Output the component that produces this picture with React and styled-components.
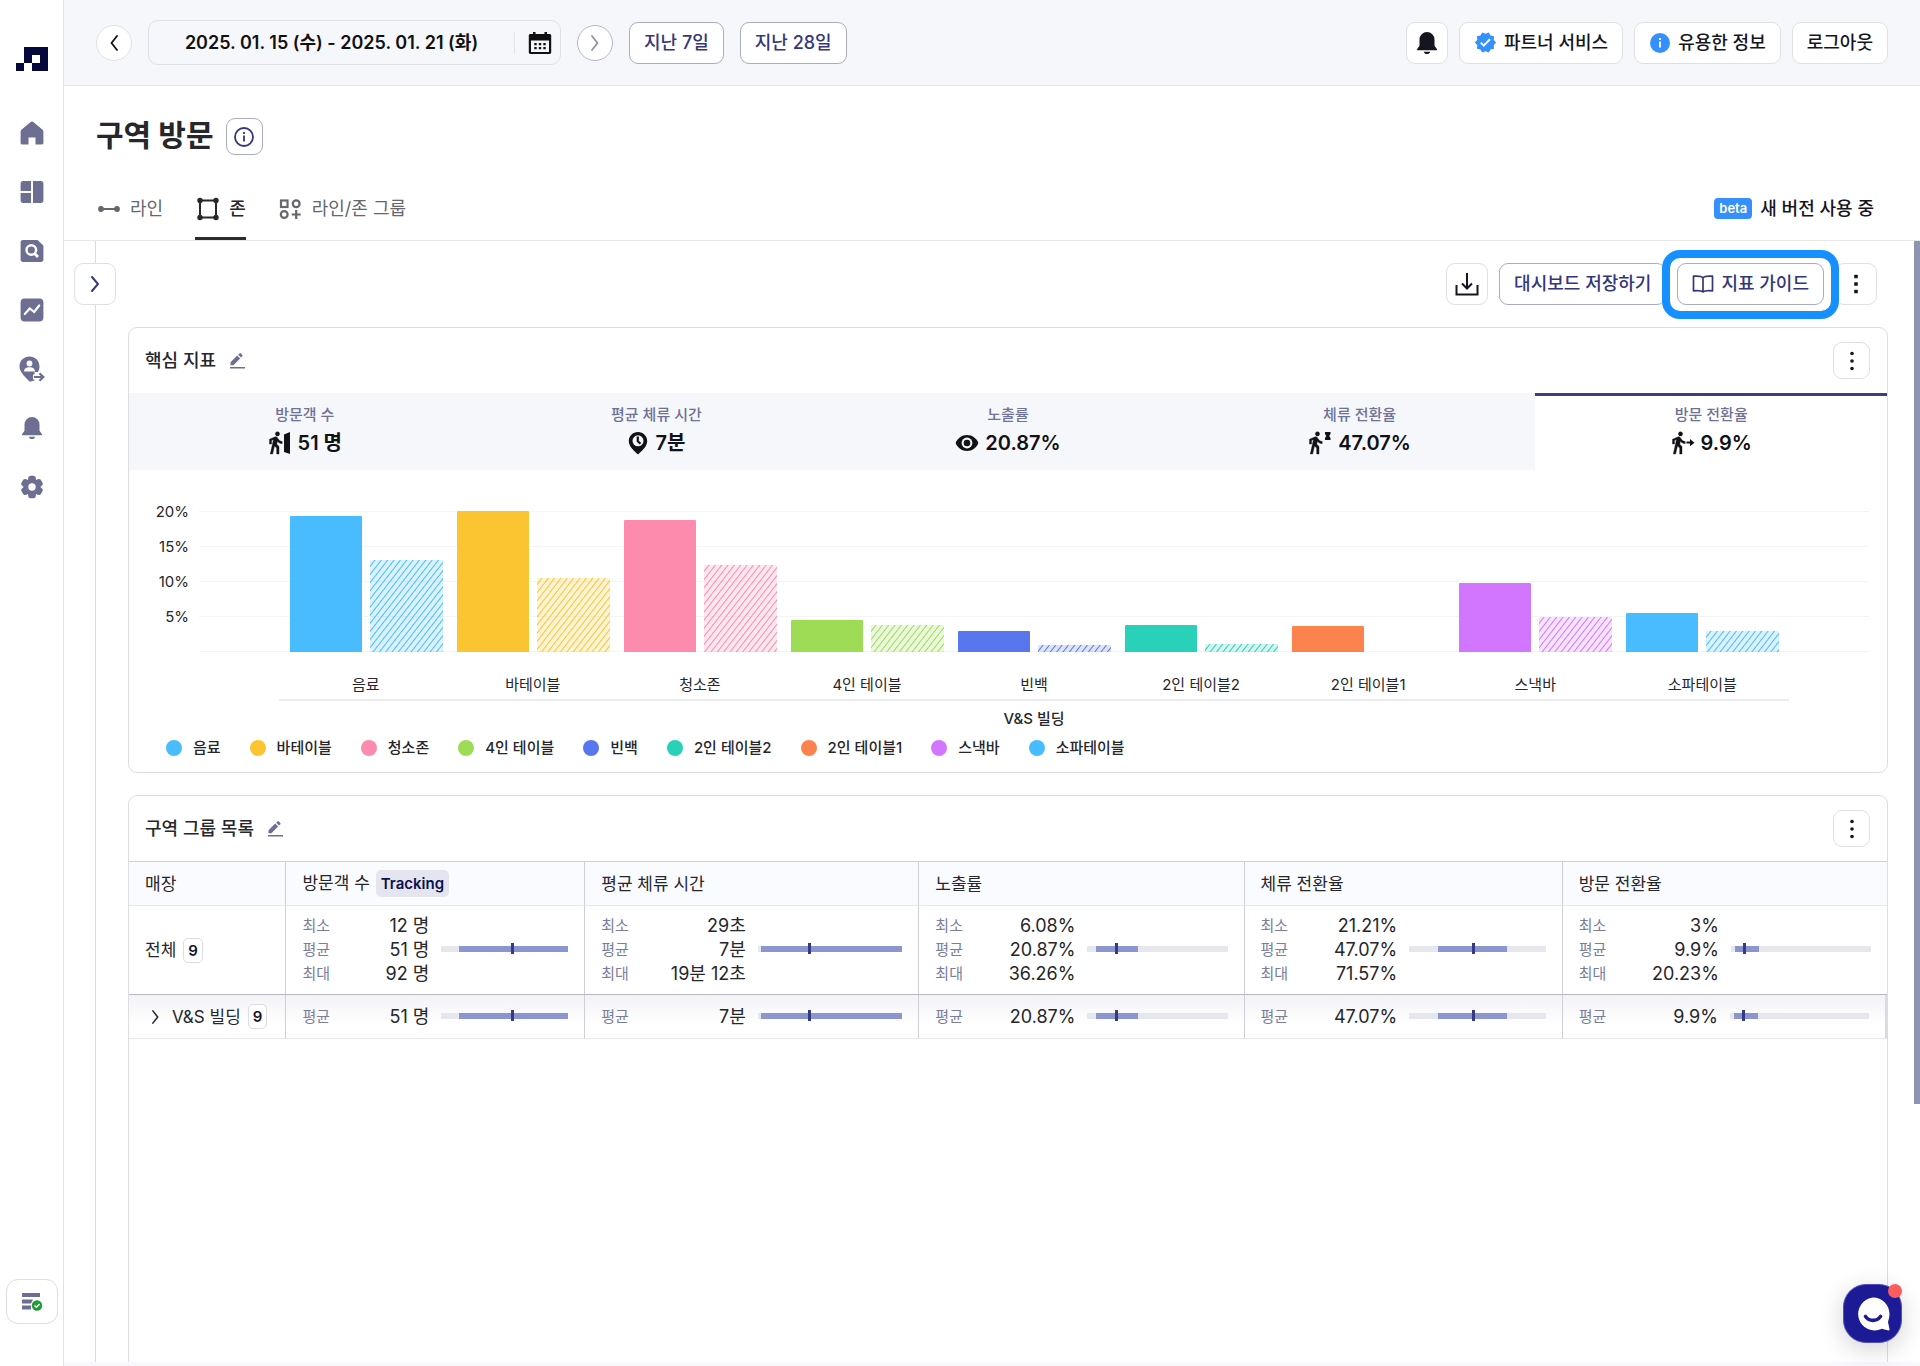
import React from "react";
import styled, { createGlobalStyle } from "styled-components";
import { MdVerified } from "react-icons/md";

const GlobalStyle = createGlobalStyle`
  *, *::before, *::after {
    box-sizing: border-box;
  }

  body {
    margin: 0;
    background: #fff;
    color: #26262b;
    font-family: Inter, "Noto Sans CJK KR", sans-serif;
    font-size: 17px;
    line-height: 24px;
  }

  button {
    font: inherit;
    color: inherit;
    cursor: pointer;
  }

  svg {
    display: block;
    flex: none;
  }
`;

const Layout = styled.div`
  display: grid;
  grid-template-columns: 64px minmax(0, 1fr);
  min-height: 100vh;
`;

const Sidebar = styled.aside`
  display: flex;
  flex-direction: column;
  align-items: center;
  padding: 47px 0 42px;
  border-right: 1px solid #e2e2e6;
`;

const SideNav = styled.nav`
  display: flex;
  flex-direction: column;
  gap: 31px;
  margin-top: 48px;
  color: #6c6f92;
`;

const SideLink = styled.a`
  display: flex;
  align-items: center;
  justify-content: center;
  width: 40px;
  height: 28px;
  color: inherit;
`;

const StatusButton = styled.button`
  display: flex;
  align-items: center;
  justify-content: center;
  width: 52px;
  height: 45px;
  margin-top: auto;
  padding: 0;
  border: 1px solid #dedee3;
  border-radius: 12px;
  background: #fff;
`;

const Main = styled.div`
  display: flex;
  flex-direction: column;
  border-bottom: 4px solid #f8f8fc;
`;

const TopBar = styled.header`
  display: flex;
  align-items: center;
  justify-content: space-between;
  height: 86px;
  padding: 0 32px;
  border-bottom: 1px solid #e4e5e9;
  background: #f6f7fa;
`;

const BarGroup = styled.div`
  display: flex;
  align-items: center;
  gap: ${(props) => props.$gap}px;
`;

const RoundButton = styled.button`
  display: flex;
  align-items: center;
  justify-content: center;
  width: 36px;
  height: 36px;
  padding: 0;
  border: 1px solid ${(props) => (props.$outlined ? "#b4b5cc" : "#e0e1e6")};
  border-radius: 50%;
  background: #fff;
  color: ${(props) => (props.$outlined ? "#8f90a8" : "#111")};
`;

const DateBox = styled.div`
  display: flex;
  align-items: center;
  width: 413px;
  height: 45px;
  border: 1px solid #e0e1e6;
  border-radius: 10px;
`;

const DateText = styled.span`
  flex: 1;
  text-align: center;
  font-size: 18px;
  font-weight: 600;
  color: #111;
`;

const CalendarButton = styled.button`
  display: flex;
  align-items: center;
  width: 46px;
  height: 22px;
  padding: 0 0 0 13px;
  border: 0;
  border-left: 1px solid #e6e6ea;
  background: none;
  color: #111;
`;

const Button = styled.button`
  display: flex;
  align-items: center;
  justify-content: center;
  gap: 7px;
  height: 42px;
  padding: 0 14px;
  border: 1px solid ${(props) => (props.$primary ? "#a9abc8" : "#dfe0e5")};
  border-radius: 9px;
  background: #fff;
  color: ${(props) => (props.$primary ? "#343779" : "#15151f")};
  font-size: 18px;
  font-weight: 500;
  white-space: nowrap;
`;

const IconButton = styled(Button)`
  width: ${(props) => props.$size}px;
  height: ${(props) => props.$size}px;
  padding: 0;
`;

const PageHead = styled.div`
  padding: 32px 46px 0 32px;
  border-bottom: 1px solid #e8e8ec;
`;

const TitleRow = styled.div`
  display: flex;
  align-items: center;
  gap: 12px;
`;

const Title = styled.h1`
  margin: 0;
  padding-bottom: 2px;
  font-size: 30px;
  line-height: 35px;
  font-weight: 700;
`;

const TabRow = styled.div`
  display: flex;
  align-items: center;
  justify-content: space-between;
  margin-top: 20px;
`;

const Tabs = styled.div`
  display: flex;
  gap: 32px;
`;

const Tab = styled.button`
  display: flex;
  align-items: center;
  gap: 10px;
  height: 65px;
  padding: 2px 0 0;
  border: 0;
  background: none;
  color: ${(props) => (props.$active ? "#26262b" : "#66666c")};
  font-size: 18px;
  font-weight: ${(props) => (props.$active ? 500 : 400)};
  box-shadow: inset 0 -3px ${(props) => (props.$active ? "#2c2c30" : "transparent")};
`;

const Version = styled.div`
  display: flex;
  align-items: center;
  gap: 8px;
  padding-top: 2px;
  color: #15151f;
  font-size: 18px;
  font-weight: 500;
`;

const Beta = styled.span`
  padding: 0 5px;
  border-radius: 4px;
  background: #3590fb;
  color: #fff;
  font-size: 13px;
  line-height: 21px;
  font-weight: 600;
`;

const Workspace = styled.div`
  position: relative;
  display: flex;
  flex: 1;
`;

const Rail = styled.div`
  width: 32px;
  border-right: 1px solid #d9d9e0;
`;

const RailToggle = styled(IconButton)`
  position: absolute;
  top: 22px;
  left: 10px;
`;

const ScrollThumb = styled.div`
  position: absolute;
  top: 0;
  right: 0;
  width: 6px;
  height: 77%;
  background: #8e92b3;
`;

const Content = styled.main`
  display: flex;
  flex: 1;
  flex-direction: column;
  gap: 22px;
  min-width: 0;
  padding: 22px 32px 0;
`;

const Toolbar = styled.div`
  display: flex;
  justify-content: flex-end;
  gap: 11px;
  padding-right: 11px;
`;

const Highlight = styled.div`
  position: relative;

  &::after {
    content: "";
    position: absolute;
    inset: -13px -15px -14px;
    border: 8px solid #1690ff;
    border-radius: 18px;
    pointer-events: none;
  }
`;

const Card = styled.section`
  border: 1px solid #dcdce2;
  border-radius: 9px;
`;

const FillCard = styled(Card)`
  flex: 1;
  border-bottom: 0;
  border-bottom-left-radius: 0;
  border-bottom-right-radius: 0;
`;

const CardHead = styled.div`
  display: flex;
  align-items: center;
  justify-content: space-between;
  height: 65px;
  padding: 0 17px 0 16px;
`;

const CardTitle = styled.h2`
  display: flex;
  align-items: center;
  gap: 12px;
  margin: 0;
  font-size: 18px;
  font-weight: 500;
`;

const PlainButton = styled.button`
  padding: 0;
  border: 0;
  background: none;
  color: #6c6f92;
`;

const MetricTabs = styled.div`
  display: grid;
  grid-template-columns: repeat(5, 1fr);
`;

const MetricTab = styled.button`
  display: flex;
  flex-direction: column;
  align-items: center;
  height: 77px;
  padding: 11px 0 0;
  border: 0;
  background: ${(props) => (props.$active ? "#fff" : "#f6f7fa")};
  box-shadow: inset 0 3px ${(props) => (props.$active ? "#3b3d7c" : "transparent")};
`;

const MetricLabel = styled.span`
  color: #6f7197;
  font-size: 15px;
  line-height: 22px;
  font-weight: 500;
`;

const MetricValue = styled.span`
  display: flex;
  align-items: center;
  gap: 6px;
  margin-top: 2px;
  color: #111118;
  font-size: 20px;
  line-height: 30px;
  font-weight: 600;
`;

const Chart = styled.div`
  display: grid;
  grid-template-columns: 70px 1fr;
  padding: 24px 18px 0 0;
  font-size: 15px;
  line-height: 20px;
`;

const YAxis = styled.div`
  padding-right: 10px;
  text-align: right;
  line-height: 35px;
`;

const Plot = styled.div`
  display: flex;
  height: 141px;
  margin-top: 17px;
  padding: 0 5%;
  background: repeating-linear-gradient(#f4f4f6 0 1px, transparent 1px 35px);
`;

const BarPair = styled.div`
  display: flex;
  flex: 1;
  align-items: flex-end;
  gap: 8px;
  padding: 0 7px;
`;

const Bar = styled.div`
  flex: 1;
  border-radius: 1px 1px 0 0;
  background: ${(props) =>
    props.$striped
      ? `repeating-linear-gradient(128deg, ${props.$color}33 0 3px, ${props.$color} 4px, ${props.$color}33 5px)`
      : props.$color};
`;

const XAxis = styled.div`
  grid-column: 2;
  margin: 0 4.8%;
`;

const XLabels = styled.div`
  display: flex;
  padding: 23px 3px 4px;
  border-bottom: 2px solid #ececf0;

  span {
    flex: 1;
    text-align: center;
  }
`;

const XGroup = styled.div`
  margin-top: 8px;
  text-align: center;
  font-weight: 500;
`;

const Legend = styled.ul`
  display: flex;
  flex-wrap: wrap;
  gap: 0 29px;
  margin: 0;
  padding: 9px 37px 14px;
  list-style: none;
  font-size: 15px;
  line-height: 20px;
  font-weight: 500;
`;

const LegendItem = styled.li`
  display: flex;
  align-items: center;
  gap: 11px;

  &::before {
    content: "";
    width: 16px;
    height: 16px;
    border-radius: 50%;
    background: ${(props) => props.$color};
  }
`;

const Table = styled.table`
  width: 100%;
  table-layout: fixed;
  border-collapse: separate;
  border-spacing: 0;
`;

const HeadCell = styled.th`
  height: 45px;
  padding: 0 16px;
  border-top: 1px solid #cfcfd8;
  border-bottom: 1px solid #e6e7ec;
  background: #fafbff;
  text-align: left;
  font-weight: 400;

  & + & {
    border-left: 1px solid #cfcfd8;
  }
`;

const Tracking = styled.span`
  display: inline-block;
  margin-left: 6px;
  padding: 0 5px;
  border-radius: 5px;
  background: #e4e5ee;
  color: #0d1050;
  font-size: 15px;
  line-height: 27px;
  font-weight: 600;
`;

const Cell = styled.td`
  padding: 8px 16px;
  border-bottom: 1px solid #b8b8c4;

  & + & {
    border-left: 1px solid #cfcfd8;
  }
`;

const GroupCell = styled(Cell)`
  padding: 9px 16px;
  border-bottom-color: #e8e8ec;
  background: linear-gradient(#f3f3f6, #fff 70%);

  &:last-child {
    border-right: 2px solid #dadae2;
  }
`;

const Store = styled.div`
  display: flex;
  align-items: center;
  gap: 7px;
  white-space: nowrap;
`;

const ExpandButton = styled.button`
  display: flex;
  width: 20px;
  padding: 0 0 0 7px;
  border: 0;
  background: none;
`;

const Count = styled.span`
  padding: 0 4px;
  border: 1px solid #dcdce2;
  border-radius: 5px;
  background: #fff;
  color: #15151f;
  font-size: 15px;
  line-height: 23px;
  font-weight: 600;
`;

const Metric = styled.div`
  display: grid;
  grid-template-columns: 1fr 1fr;
  align-items: center;
  gap: 12px;
`;

const StatLine = styled.div`
  display: flex;
  justify-content: space-between;
  white-space: nowrap;
`;

const StatLabel = styled.span`
  color: #7b7d9c;
  font-size: 15px;
`;

const StatValue = styled.span`
  font-size: 18px;
`;

const Track = styled.div`
  position: relative;
  height: 6px;
  margin-bottom: 2px;
  background: #e6e7ec;
`;

const Range = styled.div`
  position: absolute;
  top: 0;
  bottom: 0;
  background: #8b96d0;
`;

const Mark = styled.div`
  position: absolute;
  top: -3px;
  bottom: -2px;
  width: 3px;
  background: #343a85;
`;

const ChatButton = styled.button`
  position: fixed;
  right: 18px;
  bottom: 23px;
  display: flex;
  align-items: center;
  justify-content: center;
  width: 59px;
  height: 59px;
  padding: 0;
  border: 1px solid #5450bd;
  border-radius: 23px;
  background: #1c1a94;
  box-shadow: 0 6px 24px rgba(0, 0, 0, 0.18);

  &::after {
    content: "";
    position: absolute;
    top: -1px;
    right: -1px;
    width: 14px;
    height: 14px;
    border-radius: 50%;
    background: #fc5c5c;
  }
`;

const Logo = () => (
  <svg width="32" height="24" viewBox="0 0 32 24" fill="#06073c">
    <path fillRule="evenodd" d="M8 0h24v24H16v-8H8zM16 8v8h8V8z" />
    <path d="M0 16h8v8H0z" />
  </svg>
);

const HomeIcon = () => (
  <svg width="24" height="24" viewBox="0 0 24 24" fill="currentColor">
    <path d="M12 .5c.5 0 .9.2 1.3.5l9 7.4c.7.6 1.1 1.200 1.100 2.100V22c0 .8-.6 1.400-1.400 1.400h-6.500v-7h-7v7H2c-.8 0-1.400-.6-1.400-1.400V10.500c0-.9.4-1.500 1.100-2.100l9-7.400c.4-.3.8-.5 1.300-.5z" />
  </svg>
);

const DashboardIcon = () => (
  <svg width="24" height="24" viewBox="0 0 24 24" fill="currentColor">
    <path d="M3 1h8v10H.6V3.400C.6 2 1.600 1 3 1zM.6 13H11v10H3C1.600 23 .6 22 .6 20.600zM13 1h8c1.400 0 2.400 1 2.400 2.400v17.200c0 1.400-1 2.400-2.400 2.400h-8z" />
  </svg>
);

const SearchDocIcon = () => (
  <svg width="24" height="24" viewBox="0 0 24 24">
    <path fill="currentColor" d="M3 1h14.500L23.400 6.500V20.600c0 1.400-1 2.400-2.400 2.400H3C1.600 23 .6 22 .6 20.600V3.400C.6 2 1.600 1 3 1z" />
    <circle cx="11.300" cy="11" r="4.800" fill="none" stroke="#fff" strokeWidth="2.400" />
    <path d="M14.500 14.500l3.500 3.500" stroke="#fff" strokeWidth="2.800" />
  </svg>
);

const TrendIcon = () => (
  <svg width="24" height="24" viewBox="0 0 24 24">
    <rect x=".6" y=".6" width="22.800" height="22.800" rx="4" fill="currentColor" />
    <path d="M4.800 16l5-5.500 4.400 3.500 5-6.500" fill="none" stroke="#fff" strokeWidth="2.200" strokeLinecap="round" />
  </svg>
);

const VisitorIcon = () => (
  <svg width="26" height="26" viewBox="0 0 26 26">
    <path fill="currentColor" d="M10.500.5c5.600 0 10 4.300 10 10 0 1.800-.5 3.500-1.500 5.500h-3.500v8.500L12 25.500h-1.500C5 20 .5 15.500.5 10.500c0-5.700 4.400-10 10-10z" />
    <circle cx="10.500" cy="7.500" r="2.900" fill="#fff" />
    <path fill="#fff" d="M5 15.500c0-3 2.500-4.200 5.500-4.200s5.500 1.200 5.500 4.200z" />
    <path d="M14 21h9M20.500 16.500l4.500 4.500-4.500 4.500" fill="none" stroke="#fff" strokeWidth="5" />
    <path d="M15 21h8.500M20.500 17.200l3.800 3.800-3.800 3.800" fill="none" stroke="currentColor" strokeWidth="2.200" />
  </svg>
);

const BellIcon = ({ size = 24 }) => (
  <svg width={size} height={size} viewBox="0 0 24 24" fill="currentColor">
    <path d="M12 1a7.500 7.500 0 0 0-7.500 7.500v6.300L2 18.300c-.3.500 0 .9.5.9h19c.5 0 .8-.4.500-.9l-2.500-3.500V8.500A7.500 7.500 0 0 0 12 1zM8.800 20.800h6.400c-.4 1.400-1.600 2.300-3.200 2.300s-2.800-.9-3.200-2.300z" />
  </svg>
);

const GearIcon = () => (
  <svg width="24" height="24" viewBox="0 0 24 24" fill="currentColor">
    <rect x="8.200" y=".8" width="7.600" height="22.400" rx="2.500" />
    <rect x="8.200" y=".8" width="7.600" height="22.400" rx="2.500" transform="rotate(60 12 12)" />
    <rect x="8.200" y=".8" width="7.600" height="22.400" rx="2.500" transform="rotate(120 12 12)" />
    <circle cx="12" cy="12" r="8.600" />
    <circle cx="12" cy="12" r="3.700" fill="#fff" />
  </svg>
);

const ListCheckIcon = () => (
  <svg width="22" height="20" viewBox="0 0 22 20">
    <path fill="#6c6f92" d="M1 1h18v4H1zM1 7.500h11l-2 4H1zM1 13.500h9v4H1z" />
    <circle cx="16" cy="13.500" r="5.200" fill="#1f9d35" />
    <path d="M13.500 13.500l1.900 1.800 3.200-3.300" fill="none" stroke="#fff" strokeWidth="1.500" />
  </svg>
);

const Chevron = ({ left, width = 8, height = 16 }) => (
  <svg width={width} height={height} viewBox="0 0 8 16" fill="none" stroke="currentColor" strokeWidth="1.800" strokeLinecap="round" strokeLinejoin="round">
    <path d={left ? "M7 1L1.500 8 7 15" : "M1 1l5.500 7L1 15"} />
  </svg>
);

const CalendarIcon = () => (
  <svg width="24" height="24" viewBox="0 0 24 24">
    <path fill="currentColor" d="M5 1h2.500v2h9V1H19v2h2.500c1 0 1.700.7 1.700 1.700v16.600c0 1-.7 1.700-1.700 1.700h-19c-1 0-1.700-.7-1.700-1.700V4.700C.8 3.700 1.500 3 2.500 3H5z" />
    <path fill="#f6f7fa" d="M3 9.500h18V21H3z" />
    <path fill="currentColor" d="M6.300 12h2.400v2.200H6.300zM10.800 12h2.400v2.200h-2.400zM15.300 12h2.400v2.200h-2.400zM6.300 16h2.400v2.200H6.300zM10.800 16h2.400v2.200h-2.400zM15.300 16h2.400v2.200h-2.400z" />
  </svg>
);

const InfoIcon = ({ filled }) => (
  <svg width="22" height="22" viewBox="0 0 22 22">
    <circle cx="11" cy="11" r={filled ? 10 : 9} fill={filled ? "#3590fb" : "none"} stroke={filled ? "none" : "currentColor"} strokeWidth="1.800" />
    <path d="M11 9.500v6M11 6v2" stroke={filled ? "#fff" : "currentColor"} strokeWidth="1.800" />
  </svg>
);

const LineIcon = () => (
  <svg width="24" height="24" viewBox="0 0 24 24" fill="currentColor">
    <circle cx="5" cy="12" r="2.900" />
    <circle cx="21" cy="12" r="2.900" />
    <path d="M5 11h16v2H5z" />
  </svg>
);

const ZoneIcon = () => (
  <svg width="24" height="24" viewBox="0 0 24 24" fill="currentColor">
    <rect x="5" y="3.500" width="16" height="17" fill="none" stroke="currentColor" strokeWidth="2" />
    <circle cx="5" cy="3.500" r="2.700" />
    <circle cx="21" cy="3.500" r="2.700" />
    <circle cx="5" cy="20.500" r="2.700" />
    <circle cx="21" cy="20.500" r="2.700" />
  </svg>
);

const GroupIcon = () => (
  <svg width="24" height="24" viewBox="0 0 24 24" fill="none" stroke="currentColor" strokeWidth="2.200">
    <rect x="3" y="3.500" width="6.500" height="6.500" />
    <circle cx="18.200" cy="6.800" r="3.400" />
    <circle cx="6.200" cy="17.500" r="3.400" />
    <path d="M18.200 13v9M13.700 17.500h9" />
  </svg>
);

const DownloadIcon = () => (
  <svg width="24" height="24" viewBox="0 0 24 24" fill="none" stroke="currentColor" strokeWidth="2">
    <path d="M12 1v15M7 11.500l5 5 5-5M1.500 13v9.500h21V13" />
  </svg>
);

const BookIcon = () => (
  <svg width="22" height="20" viewBox="0 0 22 20" fill="none" stroke="currentColor" strokeWidth="1.700" strokeLinejoin="round">
    <path d="M11 3.800C9.500 2 6 1.800 1.500 2.200v14.600c4.500-.4 8-.2 9.500 1.200 1.500-1.400 5-1.600 9.500-1.200V2.200C16 1.800 12.500 2 11 3.800zM11 3.800v14" />
  </svg>
);

const MoreIcon = ({ square }) => (
  <svg width="4" height="20" viewBox="0 0 4 20" fill="#15151f">
    {[2.5, 10, 17.5].map((y) => (
      <rect key={y} x=".2" y={y - 1.8} width="3.600" height="3.600" rx={square ? 0.6 : 1.8} />
    ))}
  </svg>
);

const PencilIcon = () => (
  <svg width="18" height="18" viewBox="0 0 18 18" fill="currentColor">
    <path d="M2.500 13.200v-2.900l6.700-6.700 2.900 2.900-6.700 6.700zM10.200 2.700l1.300-1.300c.4-.4.900-.4 1.300 0l1.500 1.500c.4.400.4.900 0 1.300L13 5.500zM2 15h15v1.600H2z" />
  </svg>
);

const Walker = () => (
  <path
    fill="currentColor"
    stroke="currentColor"
    strokeWidth=".4"
    d="M9.500 5c1.200 0 2.100-.9 2.100-2.100S10.700.8 9.500.8s-2.100.9-2.100 2.100S8.300 5 9.500 5zM5.500 8.500L2.300 23h2.300l1.900-8 2.200 2v6H11v-7.600l-2.200-2.100.6-3.100c1.300 1.500 2.800 2.300 4.800 2.400v-2.100c-1.600-.1-2.900-.9-3.700-2.200l-1.100-1.500c-.6-.9-1.600-1.200-2.600-.8L1.500 8.200V13h2V9.500z"
  />
);

const WalkDoorIcon = () => (
  <svg width="24" height="24" viewBox="0 0 24 24">
    <Walker />
    <path fill="currentColor" d="M16 3.500l6-2.500v22l-6-2z" />
  </svg>
);

const WalkWaitIcon = () => (
  <svg width="24" height="24" viewBox="0 0 24 24">
    <Walker />
    <path fill="currentColor" d="M17 1h5.500v2l-1.300 2 1.300 2v2H17V7l1.300-2L17 3z" />
  </svg>
);

const WalkArrowIcon = () => (
  <svg width="24" height="24" viewBox="0 0 24 24">
    <Walker />
    <path fill="currentColor" d="M15.500 10.600H19V8l4.500 3.700L19 15.300v-2.700h-3.500z" />
  </svg>
);

const PinClockIcon = () => (
  <svg width="22" height="24" viewBox="0 0 22 24">
    <path fill="currentColor" d="M11 1c5.200 0 9.200 4 9.200 9 0 5.500-5 9.500-9.200 13.500C6.800 19.500 1.800 15.500 1.800 10c0-5 4-9 9.200-9z" />
    <circle cx="11" cy="9.800" r="5.500" fill="#f6f7fa" />
    <path d="M10.800 5.500v4.800l2.700 2.500" fill="none" stroke="currentColor" strokeWidth="2.200" />
  </svg>
);

const EyeIcon = () => (
  <svg width="24" height="24" viewBox="0 0 24 24">
    <path fill="currentColor" d="M12 4C6.800 4 2.400 7.300.6 12 2.400 16.700 6.800 20 12 20s9.600-3.300 11.400-8C21.600 7.300 17.200 4 12 4z" />
    <circle cx="12" cy="12" r="5.400" fill="#f6f7fa" />
    <circle cx="12" cy="12" r="3.300" fill="currentColor" />
  </svg>
);

const ChatIcon = () => (
  <svg width="34" height="34" viewBox="0 0 34 34">
    <path fill="#fff" d="M17 .5C26 .5 33.500 7.800 33.500 17c0 3.300-.9 6-1.500 8l1.500 7.300c.1.700-.4 1.200-1.100 1.100l-6.600-1.600A16.500 16.500 0 1 1 17 .5z" />
    <path d="M9.500 19.500c4 5.200 11 5.200 15 0" fill="none" stroke="#1c1a94" strokeWidth="3.600" strokeLinecap="round" />
  </svg>
);

const sideItems = [
  { label: "홈", icon: <HomeIcon /> },
  { label: "대시보드", icon: <DashboardIcon /> },
  { label: "탐색", icon: <SearchDocIcon /> },
  { label: "추세", icon: <TrendIcon /> },
  { label: "방문", icon: <VisitorIcon /> },
  { label: "알림", icon: <BellIcon /> },
  { label: "설정", icon: <GearIcon /> },
];

const metrics = [
  { label: "방문객 수", value: "51 명", icon: <WalkDoorIcon /> },
  { label: "평균 체류 시간", value: "7분", icon: <PinClockIcon /> },
  { label: "노출률", value: "20.87%", icon: <EyeIcon /> },
  { label: "체류 전환율", value: "47.07%", icon: <WalkWaitIcon /> },
  { label: "방문 전환율", value: "9.9%", icon: <WalkArrowIcon />, active: true },
];

const zones = [
  { name: "음료", color: "#49bcff", current: 19.4, previous: 13.1 },
  { name: "바테이블", color: "#fac530", current: 20.2, previous: 10.6 },
  { name: "청소존", color: "#fd8bae", current: 18.8, previous: 12.4 },
  { name: "4인 테이블", color: "#9edc56", current: 4.6, previous: 3.9 },
  { name: "빈백", color: "#5877ee", current: 3, previous: 1 },
  { name: "2인 테이블2", color: "#29d1b9", current: 3.9, previous: 1.1 },
  { name: "2인 테이블1", color: "#fd834e", current: 3.7, previous: 0 },
  { name: "스낵바", color: "#d276ff", current: 9.9, previous: 5 },
  { name: "소파테이블", color: "#49bcff", current: 5.6, previous: 3 },
];

const columns = [
  { title: "방문객 수", tag: "Tracking", width: "17%", min: "12 명", avg: "51 명", max: "92 명", range: [14, 100, 56] },
  { title: "평균 체류 시간", width: "19%", min: "29초", avg: "7분", max: "19분 12초", range: [2, 100, 36] },
  { title: "노출률", width: "18.5%", min: "6.08%", avg: "20.87%", max: "36.26%", range: [6, 36, 21] },
  { title: "체류 전환율", width: "18.1%", min: "21.21%", avg: "47.07%", max: "71.57%", range: [21, 72, 47] },
  { title: "방문 전환율", width: "18.5%", min: "3%", avg: "9.9%", max: "20.23%", range: [3, 20, 10] },
];

// height of one percent on the chart, in px
const UNIT = 7;

function Stat({ label, value }) {
  return (
    <StatLine>
      <StatLabel>{label}</StatLabel>
      <StatValue>{value}</StatValue>
    </StatLine>
  );
}

function RangeBar({ range }) {
  const [from, to, mark] = range;
  return (
    <Track>
      <Range style={{ left: `${from}%`, width: `${to - from}%` }} />
      <Mark style={{ left: `${mark - 1}%` }} />
    </Track>
  );
}

function ZoneChart() {
  return (
    <Chart>
      <YAxis>
        {[20, 15, 10, 5].map((tick) => (
          <div key={tick}>{tick}%</div>
        ))}
      </YAxis>
      <Plot>
        {zones.map((zone) => (
          <BarPair key={zone.name}>
            <Bar $color={zone.color} style={{ height: zone.current * UNIT }} />
            <Bar $color={zone.color} $striped style={{ height: zone.previous * UNIT }} />
          </BarPair>
        ))}
      </Plot>
      <XAxis>
        <XLabels>
          {zones.map((zone) => (
            <span key={zone.name}>{zone.name}</span>
          ))}
        </XLabels>
        <XGroup>V&S 빌딩</XGroup>
      </XAxis>
    </Chart>
  );
}

function GroupTable() {
  return (
    <Table>
      <colgroup>
        <col style={{ width: "8.9%" }} />
        {columns.map((col) => (
          <col key={col.title} style={{ width: col.width }} />
        ))}
      </colgroup>
      <thead>
        <tr>
          <HeadCell>매장</HeadCell>
          {columns.map((col) => (
            <HeadCell key={col.title}>
              {col.title}
              {col.tag && <Tracking>{col.tag}</Tracking>}
            </HeadCell>
          ))}
        </tr>
      </thead>
      <tbody>
        <tr>
          <Cell>
            <Store>
              전체 <Count>9</Count>
            </Store>
          </Cell>
          {columns.map((col) => (
            <Cell key={col.title}>
              <Metric>
                <div>
                  <Stat label="최소" value={col.min} />
                  <Stat label="평균" value={col.avg} />
                  <Stat label="최대" value={col.max} />
                </div>
                <RangeBar range={col.range} />
              </Metric>
            </Cell>
          ))}
        </tr>
        <tr>
          <GroupCell>
            <Store>
              <ExpandButton aria-label="펼치기">
                <Chevron width={7} height={14} />
              </ExpandButton>
              V&S 빌딩 <Count>9</Count>
            </Store>
          </GroupCell>
          {columns.map((col) => (
            <GroupCell key={col.title}>
              <Metric>
                <Stat label="평균" value={col.avg} />
                <RangeBar range={col.range} />
              </Metric>
            </GroupCell>
          ))}
        </tr>
      </tbody>
    </Table>
  );
}

function CardHeader({ title }) {
  return (
    <CardHead>
      <CardTitle>
        {title}
        <PlainButton aria-label="이름 수정">
          <PencilIcon />
        </PlainButton>
      </CardTitle>
      <IconButton $size={37} aria-label="더보기">
        <MoreIcon />
      </IconButton>
    </CardHead>
  );
}

function App() {
  return (
    <>
      <GlobalStyle />
      <Layout>
        <Sidebar>
          <Logo />
          <SideNav>
            {sideItems.map((item) => (
              <SideLink key={item.label} href="#" aria-label={item.label}>
                {item.icon}
              </SideLink>
            ))}
          </SideNav>
          <StatusButton aria-label="상태">
            <ListCheckIcon />
          </StatusButton>
        </Sidebar>

        <Main>
          <TopBar>
            <BarGroup $gap={16}>
              <RoundButton aria-label="이전">
                <Chevron left />
              </RoundButton>
              <DateBox>
                <DateText>2025. 01. 15 (수) - 2025. 01. 21 (화)</DateText>
                <CalendarButton aria-label="날짜 선택">
                  <CalendarIcon />
                </CalendarButton>
              </DateBox>
              <RoundButton $outlined aria-label="다음">
                <Chevron />
              </RoundButton>
              <Button $primary>지난 7일</Button>
              <Button $primary>지난 28일</Button>
            </BarGroup>
            <BarGroup $gap={11}>
              <IconButton $size={42} aria-label="알림">
                <BellIcon />
              </IconButton>
              <Button>
                <MdVerified size={23} color="#3590fb" />
                파트너 서비스
              </Button>
              <Button>
                <InfoIcon filled />
                유용한 정보
              </Button>
              <Button>로그아웃</Button>
            </BarGroup>
          </TopBar>

          <PageHead>
            <TitleRow>
              <Title>구역 방문</Title>
              <IconButton $primary $size={37} aria-label="도움말">
                <InfoIcon />
              </IconButton>
            </TitleRow>
            <TabRow>
              <Tabs>
                <Tab>
                  <LineIcon />
                  라인
                </Tab>
                <Tab $active>
                  <ZoneIcon />
                  존
                </Tab>
                <Tab>
                  <GroupIcon />
                  라인/존 그룹
                </Tab>
              </Tabs>
              <Version>
                <Beta>beta</Beta>
                새 버전 사용 중
              </Version>
            </TabRow>
          </PageHead>

          <Workspace>
            <Rail />
            <RailToggle $size={42} aria-label="목록 열기">
              <svg width="10" height="18" viewBox="0 0 10 18" fill="none" stroke="#343779" strokeWidth="2" strokeLinecap="round">
                <path d="M2 2l6 7-6 7" />
              </svg>
            </RailToggle>
            <Content>
              <Toolbar>
                <IconButton $size={42} aria-label="다운로드">
                  <DownloadIcon />
                </IconButton>
                <Button $primary>대시보드 저장하기</Button>
                <Highlight>
                  <Button $primary>
                    <BookIcon />
                    지표 가이드
                  </Button>
                </Highlight>
                <IconButton $size={42} aria-label="더보기">
                  <MoreIcon square />
                </IconButton>
              </Toolbar>

              <Card>
                <CardHeader title="핵심 지표" />
                <MetricTabs>
                  {metrics.map((metric) => (
                    <MetricTab key={metric.label} $active={metric.active}>
                      <MetricLabel>{metric.label}</MetricLabel>
                      <MetricValue>
                        {metric.icon}
                        {metric.value}
                      </MetricValue>
                    </MetricTab>
                  ))}
                </MetricTabs>
                <ZoneChart />
                <Legend>
                  {zones.map((zone) => (
                    <LegendItem key={zone.name} $color={zone.color}>
                      {zone.name}
                    </LegendItem>
                  ))}
                </Legend>
              </Card>

              <FillCard>
                <CardHeader title="구역 그룹 목록" />
                <GroupTable />
              </FillCard>
            </Content>
            <ScrollThumb />
          </Workspace>
        </Main>
      </Layout>
      <ChatButton aria-label="채팅 문의">
        <ChatIcon />
      </ChatButton>
    </>
  );
}

export default App;
